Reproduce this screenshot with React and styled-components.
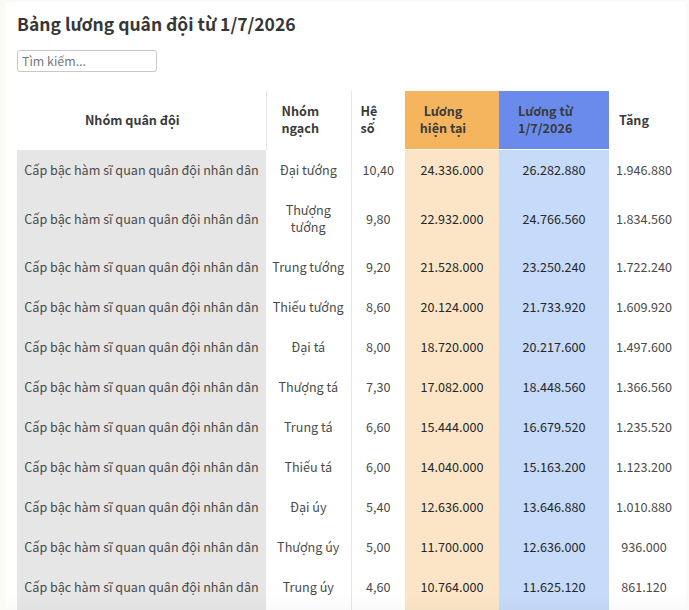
import React from "react";
import styled, { createGlobalStyle } from "styled-components";

const FONT = `"Noto Sans CJK SC", "Noto Sans", sans-serif`;

const Global = createGlobalStyle`
  html, body { margin: 0; padding: 0; background: #fbfaf7; height: 610px; overflow: hidden; }
  body { font-family: ${FONT}; color: #3a3a3a; }
`;

const Page = styled.main`
  position: relative;
  width: 680px;
  height: 608px;
  margin: 2px 3px 0 6px;
  box-sizing: border-box;
  padding: 7px 4px 0 11px;
  background: #fff;
  overflow: hidden;
  &::after {
    content: "";
    position: absolute;
    left: 0;
    right: 0;
    bottom: 0;
    height: 16px;
    background: linear-gradient(to bottom, rgba(0, 0, 0, 0), rgba(0, 0, 0, 0.02));
    pointer-events: none;
  }
`;

const Title = styled.h1`
  margin: 0;
  font-size: 17.5px;
  line-height: 30px;
  font-weight: 700;
  color: #363636;
`;

const Search = styled.input`
  display: block;
  margin-top: 11px;
  width: 140px;
  height: 22px;
  box-sizing: border-box;
  padding: 0 4px;
  border: 1px solid #c8c8c8;
  border-radius: 3px;
  font: 12.4px ${FONT};
  color: #555;
  &::placeholder { color: #777; opacity: 1; }
`;

const Table = styled.table`
  margin-top: 19px;
  width: 662px;
  table-layout: fixed;
  border-collapse: collapse;
  font-size: 12.6px;
`;

const Head = styled.th`
  height: 58.5px;
  padding: 0 ${(p) => p.$endPad || 0}px 2px ${(p) => p.$indent || 0}px;
  box-sizing: border-box;
  font-size: 12.6px;
  line-height: 17px;
  font-weight: 700;
  color: #3a3a3a;
  vertical-align: middle;
  text-align: ${(p) => p.$align || "center"};
  background: ${(p) => p.$bg || "transparent"};
  border-right: ${(p) => p.$rule ? "1.5px solid #e6e6e6" : "none"};
  border-bottom: ${(p) => p.$bg ? "1.5px solid #fff" : "none"};
`;

const Cell = styled.td`
  height: ${(p) => p.$height}px;
  padding: 0;
  text-align: center;
  line-height: 17px;
  color: ${(p) => p.$dark ? "#262626" : "#4a4a4a"};
  background: ${(p) => p.$bg || "transparent"};
  border-right: ${(p) => p.$rule ? "1.5px solid #e6e6e6" : "none"};
`;

const rows = [
  ["Đại tướng", "10,40", "24.336.000", "26.282.880", "1.946.880"],
  ["Thượng tướng", "9,80", "22.932.000", "24.766.560", "1.834.560"],
  ["Trung tướng", "9,20", "21.528.000", "23.250.240", "1.722.240"],
  ["Thiếu tướng", "8,60", "20.124.000", "21.733.920", "1.609.920"],
  ["Đại tá", "8,00", "18.720.000", "20.217.600", "1.497.600"],
  ["Thượng tá", "7,30", "17.082.000", "18.448.560", "1.366.560"],
  ["Trung tá", "6,60", "15.444.000", "16.679.520", "1.235.520"],
  ["Thiếu tá", "6,00", "14.040.000", "15.163.200", "1.123.200"],
  ["Đại úy", "5,40", "12.636.000", "13.646.880", "1.010.880"],
  ["Thượng úy", "5,00", "11.700.000", "12.636.000", "936.000"],
  ["Trung úy", "4,60", "10.764.000", "11.625.120", "861.120"],
];

export default function App() {
  return (
    <Page>
      <Global />
      <Title>Bảng lương quân đội từ 1/7/2026</Title>
      <Search placeholder="Tìm kiếm..." />
      <Table>
        <colgroup>
          <col width="249" /><col width="85" /><col width="54" /><col width="94" /><col width="110" /><col width="70" />
        </colgroup>
        <thead>
          <tr>
            <Head $rule $endPad={18}>Nhóm quân đội</Head>
            <Head $rule $align="left" $indent={15}>Nhóm<br />ngạch</Head>
            <Head $align="left" $indent={9}>Hệ<br />số</Head>
            <Head $bg="#f5b55f" $endPad={18}>Lương<br />hiện tại</Head>
            <Head $bg="#6a8bec" $align="left" $indent={19}>Lương từ<br />1/7/2026</Head>
            <Head $align="left" $indent={10}>Tăng</Head>
          </tr>
        </thead>
        <tbody>
          {rows.map((r, i) => {
            const h = i === 1 ? 56.5 : 39.97;
            return (
              <tr key={r[0]}>
                <Cell $height={h} $bg="#e6e6e6">Cấp bậc hàm sĩ quan quân đội nhân dân</Cell>
                <Cell $height={h} $rule>{i === 1 ? <>Thượng<br />tướng</> : r[0]}</Cell>
                <Cell $height={h}>{r[1]}</Cell>
                <Cell $height={h} $bg="#fbe5c6" $dark>{r[2]}</Cell>
                <Cell $height={h} $bg="#c6daf9" $dark>{r[3]}</Cell>
                <Cell $height={h}>{r[4]}</Cell>
              </tr>
            );
          })}
          <tr>
            <Cell $height={40} $bg="#e6e6e6" />
            <Cell $height={40} $rule />
            <Cell $height={40} />
            <Cell $height={40} $bg="#fbe5c6" />
            <Cell $height={40} $bg="#c6daf9" />
            <Cell $height={40} />
          </tr>
        </tbody>
      </Table>
    </Page>
  );
}
